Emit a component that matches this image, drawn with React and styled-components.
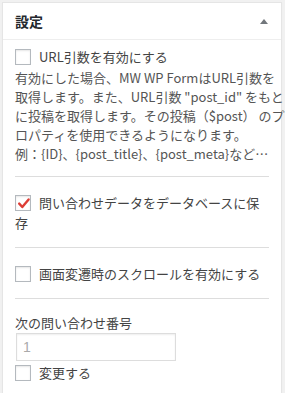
import React from 'react'
import styled, { createGlobalStyle } from 'styled-components'

const GlobalStyle = createGlobalStyle`
    html, body {
        margin: 0;
        padding: 0;
        background: #f1f1f1;
    }
    body {
        font-family: "Noto Sans CJK JP", "Liberation Sans", sans-serif;
        font-size: 13px;
        color: #444;
    }
`

// --------- panel -----------
const Panel = styled.div`
    margin: 2px 0 0 2px;
    width: 280px;
    box-sizing: border-box;
    background: #fff;
    border: 1px solid #e5e5e5;
    border-bottom: none;
    box-shadow: 0 1px 1px rgba(0, 0, 0, 0.04);
`
const Header = styled.div`
    height: 36px;
    padding: 0 13px 0 12px;
    display: flex;
    align-items: center;
    justify-content: space-between;
    border-bottom: 1px solid #eee;
`
const Title = styled.h2`
    margin: 0;
    font-size: 14px;
    font-weight: bold;
    color: #23282d;
    line-height: 20px;
`
const Toggle = styled.span`
    display: flex;
    align-items: center;
`
const Body = styled.div`
    padding: 0 12px;
`

// --------- sections -----------
const Section = styled.div`
    padding-top: ${p => p.$top}px;
    padding-bottom: ${p => p.$bottom}px;
    border-bottom: ${p => (p.$last ? 'none' : '1px solid #ddd')};
`
const Row = styled.label`
    display: block;
    line-height: 20px;
    color: #444;
`
const Box = styled.span`
    display: inline-block;
    box-sizing: border-box;
    width: 16px;
    height: 16px;
    margin: 2px 8px 0 0;
    vertical-align: top;
    border: 1px solid #b4b9be;
    background: #fff;
    box-shadow: inset 0 1px 2px rgba(0, 0, 0, 0.1);
    position: relative;
`
const Check = styled.svg`
    position: absolute;
    left: 0;
    top: 0;
`
const Description = styled.p`
    margin: 1px 0 0;
    line-height: 19px;
    color: #555;
`
const Line = styled.span`
    display: block;
    white-space: nowrap;
`
const FieldLabel = styled.div`
    line-height: 20px;
    color: #444;
`
const Input = styled.div`
    box-sizing: border-box;
    width: 160px;
    height: 28px;
    margin: 0 0 2px 1px;
    padding: 0 6px;
    border: 1px solid #ddd;
    box-shadow: inset 0 1px 2px rgba(0, 0, 0, 0.07);
    display: flex;
    align-items: center;
    font-family: "Liberation Sans", sans-serif;
    font-size: 14px;
    color: #aaa;
`

const Checkbox = ({ checked }) => (
    <Box>
        {checked && (
            <Check width="16" height="16" viewBox="0 0 16 16">
                <path d="M3.2 7.6 L6.3 11 L12.6 3.4" fill="none" stroke="#dd3d36" strokeWidth="2.4" strokeLinecap="round" strokeLinejoin="round" />
            </Check>
        )}
    </Box>
)

const lines = [
    '有効にした場合、MW WP FormはURL引数を',
    '取得します。また、URL引数 "post_id" をもと',
    'に投稿を取得します。その投稿（$post） のプ',
    'ロパティを使用できるようになります。',
    '例：{ID}、{post_title}、{post_meta}など…',
]

const App = () => {
  return (
    <>
        <GlobalStyle />
        <Panel>
            <Header>
                <Title>設定</Title>
                <Toggle>
                    <svg width="8" height="5" viewBox="0 0 8 5">
                        <path d="M0 5 L4 0 L8 5 Z" fill="#72777c" />
                    </svg>
                </Toggle>
            </Header>
            <Body>
                <Section $top={7} $bottom={13}>
                    <Row><Checkbox />URL引数を有効にする</Row>
                    <Description>
                        {lines.map(l => <Line key={l}>{l}</Line>)}
                    </Description>
                </Section>
                <Section $top={16} $bottom={14}>
                    <Row><Checkbox checked />問い合わせデータをデータベースに保存</Row>
                </Section>
                <Section $top={16} $bottom={14}>
                    <Row><Checkbox />画面変遷時のスクロールを有効にする</Row>
                </Section>
                <Section $top={14} $bottom={14} $last>
                    <FieldLabel>次の問い合わせ番号</FieldLabel>
                    <Input>1</Input>
                    <Row><Checkbox />変更する</Row>
                </Section>
            </Body>
        </Panel>
    </>
  )
}

export default App
